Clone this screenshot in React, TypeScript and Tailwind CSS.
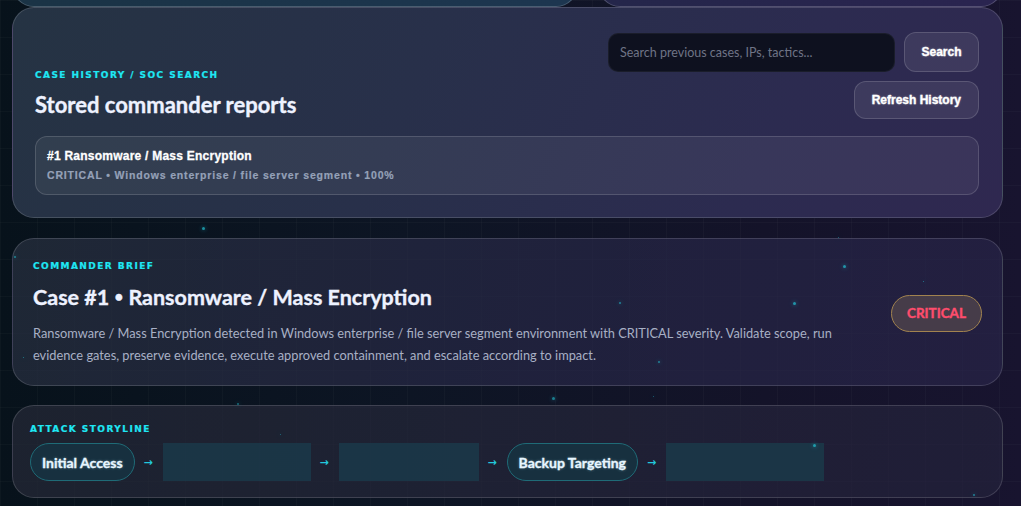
import React from "react";

const dots: { x: number; y: number; s: number; o: number }[] = [
  { x: 202, y: 227, s: 3, o: 0.7 },
  { x: 14, y: 256, s: 2, o: 0.6 },
  { x: 23, y: 357, s: 1, o: 0.6 },
  { x: 843, y: 265, s: 3, o: 0.7 },
  { x: 793, y: 302, s: 3, o: 0.7 },
  { x: 619, y: 302, s: 2, o: 0.6 },
  { x: 923, y: 281, s: 1, o: 0.6 },
  { x: 658, y: 361, s: 2, o: 0.6 },
  { x: 838, y: 237, s: 1, o: 0.5 },
  { x: 552, y: 397, s: 3, o: 0.6 },
  { x: 653, y: 396, s: 1, o: 0.5 },
  { x: 237, y: 403, s: 2, o: 0.5 },
  { x: 280, y: 434, s: 1, o: 0.5 },
  { x: 813, y: 444, s: 3, o: 0.7 },
  { x: 973, y: 494, s: 2, o: 0.6 },
];

const labelCls =
  "font-['DejaVu_Sans',sans-serif] text-[9px] font-bold leading-[12px] tracking-[0.16em] text-[#1ee8f4] uppercase [-webkit-text-stroke:0.2px_#1ee8f4]";

function Arrow() {
  return (
    <span className="w-[10px] font-['DejaVu_Sans',sans-serif] text-[11px] font-bold leading-none text-[#22c8dc]">
      →
    </span>
  );
}

function Chip({ text }: { text: string }) {
  return (
    <div className="flex h-[38px] items-center rounded-full border border-[#1f6b77] bg-[#17303f] px-[11px] text-[14px] font-bold text-[#e8f6ff] [-webkit-text-stroke:0.3px_#e8f6ff] [text-shadow:0_0_3px_rgba(180,240,255,0.45)]">
      {text}
    </div>
  );
}

function Empty({ w }: { w: number }) {
  return <div className="h-[38px] bg-[#1b3748]/90" style={{ width: w }} />;
}

export default function App() {
  return (
    <div className="relative h-[506px] overflow-hidden bg-[linear-gradient(90deg,#07121b_0%,#0d1524_40%,#141329_75%,#18142f_100%)] font-['Lato',sans-serif]">
      <div className="pointer-events-none absolute inset-0 bg-[linear-gradient(rgba(255,255,255,0.022)_1px,transparent_1px),linear-gradient(90deg,rgba(255,255,255,0.022)_1px,transparent_1px)] bg-[size:37px_37px]" />

      <div className="relative flex flex-col pl-[12px] pr-[18px]">
        {/* top row, scrolled off */}
        <div className="flex h-[7px] flex-col justify-end overflow-hidden">
          <div className="grid h-[60px] shrink-0 grid-cols-[566px_1fr] gap-[20px]">
            <div className="rounded-[22px] border border-white/20 bg-[linear-gradient(90deg,#1a3345,#1d3650)]" />
            <div className="rounded-[22px] border border-white/20 bg-[linear-gradient(90deg,#24264a,#2a2450)]" />
          </div>
        </div>

        {/* Case history */}
        <section className="rounded-[22px] border border-white/15 bg-[linear-gradient(115deg,#253343_0%,#28304a_40%,#2c2b50_75%,#2f2850_100%)] pl-[22px] pr-[23px] pt-[24px] pb-[22px]">
          <div className="flex items-end justify-between">
            <div className="flex flex-col">
              <div className={labelCls}>Case History / SOC Search</div>
              <h2 className="mt-[10px] text-[22px] font-bold leading-[28px] text-[#eef2ff] [-webkit-text-stroke:0.35px_#eef2ff]">
                Stored commander reports
              </h2>
            </div>
            <div className="flex flex-col items-end gap-[9px]">
              <div className="flex items-center gap-[9px]">
                <input
                  className="h-[39px] w-[287px] rounded-[10px] border border-white/5 bg-[#0e111f] px-[11px] text-[12.5px] text-[#cbd5e1] outline-none placeholder:text-[#6f7486]"
                  placeholder="Search previous cases, IPs, tactics..."
                />
                <button className="h-[40px] w-[75px] rounded-[12px] border border-white/15 bg-white/[0.08] font-['Liberation_Sans',sans-serif] text-[12px] font-bold text-white [-webkit-text-stroke:0.3px_#fff] [text-shadow:0_0_2px_rgba(255,255,255,0.5)]">
                  Search
                </button>
              </div>
              <button className="h-[38px] rounded-[12px] border border-white/15 bg-white/[0.08] px-[17px] font-['Liberation_Sans',sans-serif] text-[12px] font-bold text-white [-webkit-text-stroke:0.3px_#fff] [text-shadow:0_0_2px_rgba(255,255,255,0.5)]">
                Refresh History
              </button>
            </div>
          </div>
          <div className="mt-[17px] flex h-[59px] flex-col justify-center rounded-[12px] border border-white/15 bg-white/[0.06] px-[11px] font-['Liberation_Sans',sans-serif]">
            <div className="text-[12px] font-bold leading-[14px] tracking-[0.02em] text-white [-webkit-text-stroke:0.3px_#fff]">
              #1 Ransomware / Mass Encryption
            </div>
            <div className="mt-[6px] text-[10.5px] font-bold leading-[13px] tracking-[0.08em] text-[#95a1b8] [-webkit-text-stroke:0.2px_#95a1b8]">
              CRITICAL • Windows enterprise / file server segment • 100%
            </div>
          </div>
        </section>

        {/* Commander brief */}
        <section className="mt-[20px] flex items-center justify-between rounded-[22px] border border-white/15 bg-[linear-gradient(115deg,rgba(40,48,64,0.72)_0%,rgba(38,38,70,0.72)_60%,rgba(40,36,72,0.72)_100%)] px-[20px] pt-[21px] pb-[19px]">
          <div className="flex max-w-[805px] flex-col">
            <div className={labelCls}>Commander Brief</div>
            <h2 className="mt-[11px] h-[28px] text-[21.5px] font-bold leading-[28px] text-[#eef2ff] [-webkit-text-stroke:0.35px_#eef2ff]">
              Case #1 <span className="relative top-[-3px] text-[15px] leading-[0]">•</span> Ransomware / Mass Encryption
            </h2>
            <p className="mt-[11px] text-[12.8px] leading-[22px] text-[#a8b0c5]">
              Ransomware / Mass Encryption detected in Windows enterprise / file server segment environment with
              CRITICAL severity. Validate scope, run evidence gates, preserve evidence, execute approved containment,
              and escalate according to impact.
            </p>
          </div>
          <div className="flex h-[37px] items-center rounded-full border border-[#a2834f] bg-[#463c49] px-[15px] text-[13.5px] font-bold text-[#ff4d6d] [-webkit-text-stroke:0.4px_#ff4d6d]">
            CRITICAL
          </div>
        </section>

        {/* Attack storyline */}
        <section className="mt-[19px] rounded-[22px] border border-white/15 bg-[linear-gradient(115deg,rgba(38,42,56,0.7)_0%,rgba(36,34,60,0.7)_100%)] px-[17px] pt-[17px] pb-[16px]">
          <div className={labelCls}>Attack Storyline</div>
          <div className="mt-[8px] flex items-center gap-[9px]">
            <Chip text="Initial Access" />
            <Arrow />
            <Empty w={148} />
            <Arrow />
            <Empty w={140} />
            <Arrow />
            <Chip text="Backup Targeting" />
            <Arrow />
            <Empty w={158} />
          </div>
        </section>
      </div>

      {dots.map((d, i) => (
        <span
          key={i}
          className="pointer-events-none absolute rounded-full bg-[#22c5d6] shadow-[0_0_4px_rgba(34,211,238,0.8)]"
          style={{ left: d.x, top: d.y, width: d.s, height: d.s, opacity: d.o }}
        />
      ))}
    </div>
  );
}
